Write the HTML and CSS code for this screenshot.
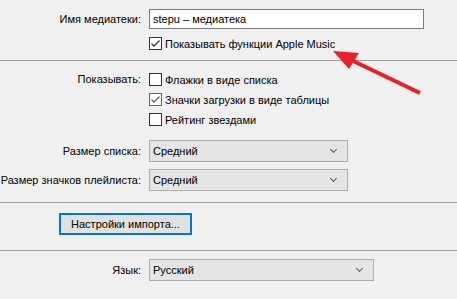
FILE: index.html
```html
<!DOCTYPE html>
<html lang="ru">
<head>
    <meta charset="UTF-8">
    <title>Общие настройки</title>
    <link rel="stylesheet" href="styles.css">
</head>
<body>
    <div class="prefs">
        <!-- Library name -->
        <div class="group group-name">
            <div class="grid">
                <div class="cap">Имя медиатеки:</div>
                <div class="field">stepu – медиатека</div>
                <div></div>
                <div class="check"><span class="box on"></span>Показывать функции Apple Music</div>
            </div>
        </div>

        <!-- View options -->
        <div class="group group-view">
            <div class="grid">
                <div class="cap">Показывать:</div>
                <div class="check"><span class="box"></span>Флажки в виде списка</div>
                <div></div>
                <div class="check"><span class="box on soft"></span>Значки загрузки в виде таблицы</div>
                <div></div>
                <div class="check"><span class="box"></span>Рейтинг звездами</div>
            </div>
            <div class="grid selects">
                <div class="cap">Размер списка:</div>
                <div class="select w-short">Средний</div>
                <div class="cap">Размер значков плейлиста:</div>
                <div class="select w-short">Средний</div>
            </div>
        </div>

        <!-- Import -->
        <div class="group group-import">
            <div class="button">Настройки импорта...</div>
        </div>

        <!-- Language -->
        <div class="group group-lang">
            <div class="grid">
                <div class="cap">Язык:</div>
                <div class="select w-long">Русский</div>
            </div>
        </div>

        <svg class="arrow" width="457" height="299" viewBox="0 0 457 299">
            <line x1="420" y1="93" x2="347" y2="58" stroke="#e8202a" stroke-width="4"/>
            <polygon points="333,51 359,53 349,69" fill="#e8202a"/>
        </svg>
    </div>
</body>
</html>
```

FILE: styles.css
```css
body {
    margin: 0;
    background-color: #f0f0f0;
    font-family: "Liberation Sans", Arial, sans-serif;
    font-size: 11px;
    color: #000;
}

.prefs {
    position: relative;
    width: 457px;
    height: 299px;
    overflow: hidden;
}

.group {
    border-top: 1px solid #a0a0a0;
}

.group-name {
    border-top: none;
    padding: 9px 0 10px;
}

.group-view {
    padding: 12px 0 11px;
}

.group-import {
    padding: 10px 0 15px 59px;
}

.group-lang {
    padding: 8px 0 19px;
}

.grid {
    display: grid;
    grid-template-columns: 141px 1fr;
    column-gap: 8px;
    row-gap: 7px;
    align-items: center;
}

.group-name .grid {
    row-gap: 8px;
}

.selects {
    margin-top: 14px;
}

.cap {
    display: flex;
    justify-content: flex-end;
    white-space: nowrap;
    line-height: 13px;
}

.field {
    width: 275px;
    height: 20px;
    box-sizing: border-box;
    border: 1px solid #7a7a7a;
    background-color: #fff;
    padding: 0 3px;
    line-height: 18px;
}

.check {
    display: flex;
    align-items: center;
    height: 13px;
    white-space: nowrap;
}

.box {
    width: 13px;
    height: 13px;
    box-sizing: border-box;
    border: 1px solid #333;
    background-color: #fff;
    margin-right: 3px;
    flex-shrink: 0;
}

.box.soft {
    border-color: #666;
}

.box.on {
    background-image: url("data:image/svg+xml,%3Csvg xmlns='http://www.w3.org/2000/svg' width='11' height='11'%3E%3Cpath d='M1.5 5.5 L4 8 L9.5 2.5' fill='none' stroke='%23333' stroke-width='1.3'/%3E%3C/svg%3E");
    background-repeat: no-repeat;
}

.box.on.soft {
    background-image: url("data:image/svg+xml,%3Csvg xmlns='http://www.w3.org/2000/svg' width='11' height='11'%3E%3Cpath d='M1.5 5.5 L4 8 L9.5 2.5' fill='none' stroke='%23666' stroke-width='1.3'/%3E%3C/svg%3E");
}

.select {
    position: relative;
    height: 22px;
    box-sizing: border-box;
    border: 1px solid #acacac;
    background-color: #e5e5e5;
    padding: 0 3px;
    line-height: 20px;
}

.select::after {
    content: "";
    position: absolute;
    right: 11px;
    top: 6px;
    width: 4px;
    height: 4px;
    border-right: 1px solid #555;
    border-bottom: 1px solid #555;
    transform: rotate(45deg);
}

.w-short {
    width: 199px;
}

.w-long {
    width: 225px;
}

.button {
    width: 133px;
    height: 22px;
    box-sizing: border-box;
    border: 2px solid #0078d7;
    background-color: #e1e1e1;
    text-align: center;
    line-height: 18px;
}

.arrow {
    position: absolute;
    left: 0;
    top: 0;
    pointer-events: none;
}
```
